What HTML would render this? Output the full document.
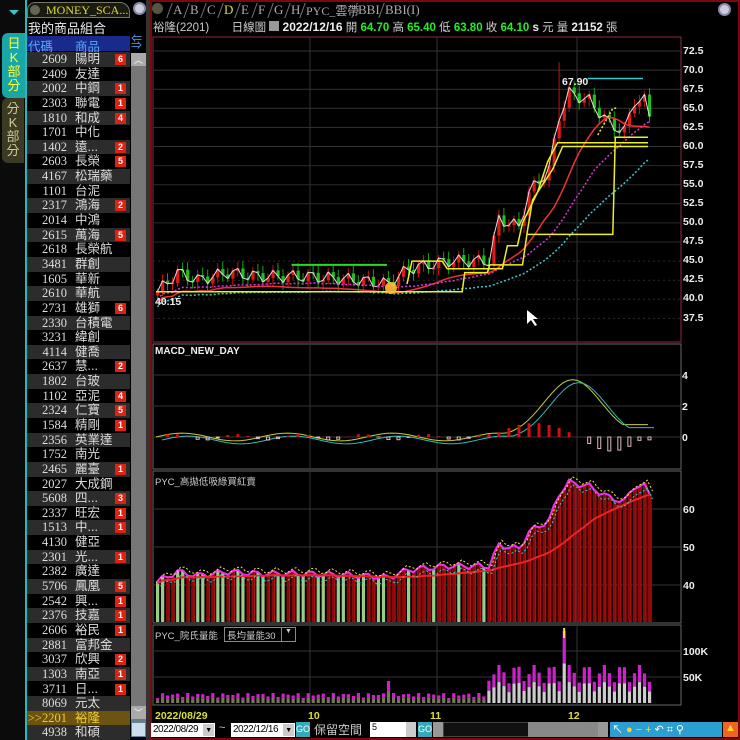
<!DOCTYPE html>
<html><head><meta charset="utf-8"><style>
*{margin:0;padding:0;box-sizing:border-box}
body{width:740px;height:740px;background:#000;overflow:hidden;position:relative;font-family:"Liberation Sans","Noto Sans CJK TC",sans-serif;color:#ddd}
.a{position:absolute}
.row{position:absolute;left:27px;width:103px;height:14.6px;font-size:12.5px;line-height:14.6px;color:#ddd}
.row .c{position:absolute;left:0;width:40px;text-align:right;font-family:"Liberation Serif","Noto Sans CJK TC",serif}
.row .n{position:absolute;left:48px}
.row .b{position:absolute;left:88px;top:2px;width:11px;height:11px;background:#d21;color:#fff;font-size:9px;line-height:11px;text-align:center;font-weight:bold}
.ax{position:absolute;left:683px;font-size:10.5px;font-weight:bold;color:#eee}
.tab{position:absolute;top:2px;height:16px;font-size:13px;color:#aaa;font-family:"Liberation Serif","Noto Sans CJK TC",serif;padding-left:4px}
.tab:before{content:"";position:absolute;left:0;top:1px;width:1px;height:15px;background:#777;transform:skewX(-20deg)}
</style></head><body>
<div class="a" style="left:0;top:0;width:26px;height:740px;background:#0b0b0b"></div>
<div class="a" style="left:9px;top:10px;width:0;height:0;border-left:5px solid transparent;border-right:5px solid transparent;border-top:5px solid #3cc"></div>
<div class="a" style="left:2px;top:33px;width:24px;height:65px;background:#1aa6a6;border-radius:6px 0 0 6px;color:#ff3;font-size:13px;line-height:14px;text-align:center;padding-top:4px">日<br>K<br>部<br>分</div>
<div class="a" style="left:2px;top:98px;width:22px;height:65px;background:#3c3a22;border-radius:6px 0 0 6px;color:#cc9;font-size:13px;line-height:14px;text-align:center;padding-top:4px">分<br>K<br>部<br>分</div>
<div class="a" style="left:25px;top:0;width:2px;height:740px;background:#2bb"></div>
<div class="a" style="left:27px;top:2px;width:103px;height:16px;border-radius:8px 10px 0 0;border:1px solid #776;background:#1a1a10"></div>
<div class="a" style="left:30px;top:5px;width:10px;height:10px;border-radius:50%;background:#665"></div>
<div class="a" style="left:46px;top:3px;font-size:12px;color:#dd3;font-family:'Liberation Serif',serif">MONEY_SCA...</div>
<div class="a" style="left:133px;top:2px;width:13px;height:13px;border-radius:50%;background:#ccd;border:2px solid #88a"></div>
<div class="a" style="left:28px;top:18px;font-size:13px;color:#eee">我的商品組合</div>
<div class="a" style="left:27px;top:36px;width:103px;height:15px;background:#1a2a8a"></div>
<div class="a" style="left:28px;top:36px;font-size:12.5px;color:#5af">代碼</div>
<div class="a" style="left:75px;top:36px;font-size:12.5px;color:#5af">商品</div>
<div class="a" style="left:131px;top:36px;width:15px;height:15px;color:#5af;font-size:11px;line-height:7px">⇐<br>⇒</div>
<div class="a" style="left:131px;top:53px;width:15px;height:672px;background:#777"></div>
<div class="a" style="left:131px;top:53px;width:15px;height:13px;background:#aaa;color:#fff;font-size:9px;text-align:center">︿</div>
<div class="a" style="left:131px;top:706px;width:15px;height:13px;background:#aaa;color:#fff;font-size:9px;text-align:center">﹀</div>
<div class="a" style="left:131px;top:722px;width:15px;height:15px;background:#cde;border:1px solid #58a"></div>
<div class="a" style="left:146px;top:0;width:4px;height:740px;background:#333"></div>
<div id="list"></div>

<div class="a" style="left:150px;top:0;width:590px;height:740px;border:2px solid #7a0a0a;border-top-width:2px"></div>
<div class="a" style="left:152px;top:3px;width:11px;height:11px;border-radius:50%;background:#554"></div>
<div class="tab" style="left:169px">A</div><div class="tab" style="left:186px">B</div><div class="tab" style="left:203px">C</div><div class="tab" style="left:220px;color:#dd3">D</div><div class="tab" style="left:237px">E</div><div class="tab" style="left:254px">F</div><div class="tab" style="left:270px">G</div><div class="tab" style="left:287px">H</div><div class="tab" style="left:302px;font-size:12px">PYC_雲帶</div><div class="tab" style="left:354px">BBI</div><div class="tab" style="left:381px">BBI(I)</div>
<div class="a" style="left:718px;top:3px;width:13px;height:13px;border-radius:50%;background:#ccd;border:2px solid #88a"></div>
<div class="a" style="left:153px;top:19px;font-size:11.5px;color:#ccc;white-space:nowrap">裕隆(2201)&nbsp;&nbsp;&nbsp;&nbsp;&nbsp;&nbsp;&nbsp;日線圖 <span style="display:inline-block;width:10px;height:10px;background:#999"></span> <b style="color:#eee;font-size:12px">2022/12/16</b> 開 <b style="color:#2e2">64.70</b> 高 <b style="color:#2e2">65.40</b> 低 <b style="color:#2e2">63.80</b> 收 <b style="color:#2e2">64.10</b> <b style="color:#eee">s</b> 元 量 <b style="color:#eee">21152</b> 張</div>
<svg class="a" style="left:0;top:0" width="740" height="740" id="sv"></svg>
<div class="ax" style="top:45px">72.5</div><div class="ax" style="top:64px">70.0</div><div class="ax" style="top:83px">67.5</div><div class="ax" style="top:102px">65.0</div><div class="ax" style="top:121px">62.5</div><div class="ax" style="top:140px">60.0</div><div class="ax" style="top:159px">57.5</div><div class="ax" style="top:178px">55.0</div><div class="ax" style="top:197px">52.5</div><div class="ax" style="top:216px">50.0</div><div class="ax" style="top:235px">47.5</div><div class="ax" style="top:254px">45.0</div><div class="ax" style="top:273px">42.5</div><div class="ax" style="top:292px">40.0</div><div class="ax" style="top:312px">37.5</div>
<div class="a" style="left:562px;top:76px;font-size:10.5px;font-weight:bold;color:#eee">67.90</div>
<div class="a" style="left:155px;top:296px;font-size:10.5px;font-weight:bold;color:#eee">40.15</div>
<div class="a" style="left:155px;top:346px;font-size:10px;font-weight:bold;color:#eee">MACD_NEW_DAY</div>
<div class="ax" style="left:682px;top:370px">4</div><div class="ax" style="left:682px;top:401px">2</div><div class="ax" style="left:682px;top:432px">0</div>
<div class="a" style="left:155px;top:474px;font-size:9.5px;color:#ccc">PYC_高拋低吸綠買紅賣</div>
<div class="ax" style="top:504px">60</div><div class="ax" style="top:542px">50</div><div class="ax" style="top:580px">40</div>
<div class="a" style="left:155px;top:628px;font-size:9.5px;color:#ccc">PYC_院氏量能</div>
<div class="a" style="left:224px;top:627px;width:72px;height:15px;border:1px solid #888;font-size:9.5px;color:#ccc;padding-left:2px">長均量能30<span style="position:absolute;right:0;top:0;width:14px;height:13px;border-left:1px solid #888;text-align:center;font-size:7px">▼</span></div>
<div class="ax" style="top:646px">100K</div><div class="ax" style="top:672px">50K</div>
<div class="a" style="left:155px;top:710px;font-size:10.5px;color:#dd3;font-weight:bold">2022/08/29</div>
<div class="a" style="left:308px;top:710px;font-size:10.5px;color:#dd3;font-weight:bold">10</div>
<div class="a" style="left:430px;top:710px;font-size:10.5px;color:#dd3;font-weight:bold">11</div>
<div class="a" style="left:568px;top:710px;font-size:10.5px;color:#dd3;font-weight:bold">12</div>
<div class="a" style="left:151px;top:723px;width:64px;height:14px;background:#fff;color:#000;font-size:10px;line-height:14px;padding-left:2px;letter-spacing:-0.5px">2022/08/29<span style="position:absolute;right:1px;top:1px;width:11px;height:12px;background:#ccc;font-size:7px;text-align:center">▼</span></div>
<div class="a" style="left:219px;top:722px;font-size:11px;color:#ccc">~</div>
<div class="a" style="left:231px;top:723px;width:64px;height:14px;background:#fff;color:#000;font-size:10px;line-height:14px;padding-left:2px;letter-spacing:-0.5px">2022/12/16<span style="position:absolute;right:1px;top:1px;width:11px;height:12px;background:#ccc;font-size:7px;text-align:center">▼</span></div>
<div class="a" style="left:296px;top:722px;width:14px;height:15px;background:#3ab;color:#fff;font-size:9px;text-align:center;line-height:15px">GO</div>
<div class="a" style="left:314px;top:721px;font-size:12px;color:#ccc">保留空間</div>
<div class="a" style="left:370px;top:722px;width:46px;height:15px;background:#fff;color:#000;font-size:9px;padding-left:2px">5<span style="position:absolute;right:0;top:0;width:10px;height:15px;background:#ccc"></span></div>
<div class="a" style="left:418px;top:722px;width:14px;height:15px;background:#3ab;color:#fff;font-size:9px;text-align:center;line-height:15px">GO</div>
<div class="a" style="left:433px;top:722px;width:10px;height:15px;background:#999"></div>
<div class="a" style="left:443px;top:722px;width:155px;height:15px;background:#111;border:1px solid #444"></div>
<div class="a" style="left:528px;top:722px;width:70px;height:15px;background:#888"></div>
<div class="a" style="left:598px;top:722px;width:10px;height:15px;background:#999"></div>
<div class="a" style="left:610px;top:722px;width:112px;height:15px;background:#2a9fd0"></div>
<div class="a" style="left:612px;top:721px;font-size:11px;color:#fff;letter-spacing:3px;white-space:nowrap">↖<span style="color:#fc3">●</span><span style="color:#fd3">−+</span>↶⌗⚲</div>
<div class="a" style="left:723px;top:722px;width:15px;height:15px;background:#e62;color:#fd3;font-size:11px;text-align:center">▲</div>
<script>
(function(){
var rows=[["2609","陽明","6"],["2409","友達",""],["2002","中鋼","1"],["2303","聯電","1"],["1810","和成","4"],["1701","中化",""],["1402","遠...","2"],["2603","長榮","5"],["4167","松瑞藥",""],["1101","台泥",""],["2317","鴻海","2"],["2014","中鴻",""],["2615","萬海","5"],["2618","長榮航",""],["3481","群創",""],["1605","華新",""],["2610","華航",""],["2731","雄獅","6"],["2330","台積電",""],["3231","緯創",""],["4114","健喬",""],["2637","慧...","2"],["1802","台玻",""],["1102","亞泥","4"],["2324","仁寶","5"],["1584","精剛","1"],["2356","英業達",""],["1752","南光",""],["2465","麗臺","1"],["2027","大成鋼",""],["5608","四...","3"],["2337","旺宏","1"],["1513","中...","1"],["4130","健亞",""],["2301","光...","1"],["2382","廣達",""],["5706","鳳凰","5"],["2542","興...","1"],["2376","技嘉","1"],["2606","裕民","1"],["2881","富邦金",""],["3037","欣興","2"],["1303","南亞","1"],["3711","日...","1"],["8069","元太",""],["2201","裕隆",""],["4938","和碩",""]];
var h="";rows.forEach(function(r,i){var y=52+i*14.64;var bg=i==45?"#6b5410":(i%2==0?"#2c2c2c":"#000");
h+='<div class="row" style="top:'+y+'px;background:'+bg+'"><span class="c"'+(i==45?' style="left:-4px;width:44px;color:#ec3"':'')+'>'+(i==45?"&gt;&gt;":"")+r[0]+'</span><span class="n"'+(i==45?' style="color:#ec3"':'')+'>'+r[1]+'</span>'+(r[2]?'<span class="b">'+r[2]+'</span>':'')+'</div>';});
document.getElementById("list").innerHTML=h;
var s="";
function L(x1,y1,x2,y2,c,w,d){s+='<line x1="'+x1+'" y1="'+y1+'" x2="'+x2+'" y2="'+y2+'" stroke="'+c+'" stroke-width="'+(w||1)+'"'+(d?' stroke-dasharray="'+d+'"':'')+'/>';}
function R(x,y,w,hh,f,st){s+='<rect x="'+x+'" y="'+y+'" width="'+w+'" height="'+Math.max(0,hh)+'" fill="'+f+'"'+(st?' stroke="'+st+'"':'')+'/>';}
function P(pts,c,w,d){s+='<polyline fill="none" points="'+pts.map(function(p){return p[0].toFixed(1)+","+p[1].toFixed(1)}).join(" ")+'" stroke="'+c+'" stroke-width="'+(w||1)+'"'+(d?' stroke-dasharray="'+d+'"':'')+'/>';}
[[37,342],[344,469],[471,623],[625,705]].forEach(function(p){R(153,p[0],528,p[1]-p[0],"none","#666");});
R(153,37,528,305,"none","#8a2a4a");
[310,437,577].forEach(function(x){L(x,37,x,705,"#333");});
for(var i=0;i<15;i++){var y=51+i*19.1;L(153,y,681,y,i<6?"#333":"#2a2a2a",1,i>=11?"2,3":null);}
[375,406,437].forEach(function(y){L(153,y,681,y,"#333");});
[509,547,585].forEach(function(y){L(153,y,681,y,"#333");});
[651,677].forEach(function(y){L(153,y,681,y,"#333");});
var kp=[[0,41],[4,43.5],[8,42.5],[14,43.5],[20,43],[30,43],[40,42.5],[46,42],[50,44],[58,45],[66,45],[68,50.5],[72,49.5],[74,54],[78,57],[80,64],[82,67],[86,66],[90,63],[93,62],[95,66],[97,66],[98,64]];
function pr(i){for(var k=0;k<kp.length-1;k++){if(i<=kp[k+1][0]){var t=(i-kp[k][0])/(kp[k+1][0]-kp[k][0]);return kp[k][1]+t*(kp[k+1][1]-kp[k][1]);}}return 64;}
var N=99,x0=156,dx=5.02;function X(i){return x0+i*dx;}function Y(p){return 51+(72.5-p)*7.64;}
var cl=[];for(var i=0;i<N;i++){cl.push(pr(i)+Math.sin(i*1.7)*0.8);}
var wl=[];
for(var i=0;i<N;i++){var o=i?cl[i-1]:cl[0]-0.5,c=cl[i];var up=c>=o;var hi=Math.max(o,c)+0.4+Math.abs(Math.sin(i*2.3))*0.6,lo=Math.min(o,c)-0.4-Math.abs(Math.cos(i*1.9))*0.6;
if(i==80)hi=71;var col=up?"#e01818":"#1fbf1f";L(X(i)+1.5,Y(hi),X(i)+1.5,Y(lo),up?"#c11":"#1a1");R(X(i),Y(Math.max(o,c)),3.2,Math.max(1.5,Math.abs(Y(o)-Y(c))),col);wl.push([X(i)+1.5,Y(c)]);}
P(wl,"#ddd",1);
function ma(n,off){var a=[];for(var i=0;i<N;i++){var sm=0,k=0;for(var j=Math.max(0,i-n);j<=i;j++){sm+=cl[j];k++;}a.push([X(i)+1.5,Y(sm/k-off)]);}return a;}
P(ma(10,1.5),"#e33",1.5);P(ma(20,1.0),"#d3d",1.5,"2,2");P(ma(30,2.0),"#3cc",1.5,"2,2");
L(X(27),Y(44.5),X(46),Y(44.5),"#2d2",2);
function step(pts,d){var a=[];pts.forEach(function(p){a.push([X(p[0]),Y(p[1])]);});P(a,"#ee2",1.5,d);}
step([[0,41],[61,41],[61.5,43.5],[66,43.5],[66.5,44.5],[73,44.5],[74,49],[75,53],[77,55],[79,57],[81,60],[98,60]]);
step([[50,42],[51,45],[57,45],[58,44],[69,44],[70,47],[72,47],[73,50],[76,54],[78,58],[80,60.5],[98,60.5]]);
step([[74,48.5],[91,48.5],[91.5,61.2],[98,61.2]]);
step([[88,61.5],[91,65],[92,65]],"2,2");
L(X(86),Y(68.9),X(97),Y(68.9),"#3cc",1.5);
s+='<circle cx="391" cy="288" r="6" fill="#fb3" opacity="0.9"/>';
s+='<polygon points="527,310 527,324 531,320 535,326 537,325 533,319 538,319" fill="#fff"/>';
var m1=[],m2=[];for(var i=0;i<N;i++){var v=0.25*Math.sin(i*0.3);if(i>62)v=Math.max(v,3.7*Math.exp(-Math.pow((i-83)/8,2)));if(i>90)v=Math.max(0.8,v);var yy=437-v*15.5;m1.push([X(i),yy]);m2.push([X(i)+6,yy+3]);}
P(m1,"#cc3",1);P(m2,"#3bb",1);
for(var i=0;i<N;i+=2){var hv=i>66&&i<84?Math.sin((i-66)/18*Math.PI)*14:(i>=84&&i<97?-Math.sin((i-84)/13*Math.PI)*14:(Math.sin(i*0.5)*3));if(hv>0)R(X(i),437-hv,3,hv,"#c11");else R(X(i),437,3,-hv,"none","#dbb");}
var tp=[];for(var i=0;i<N;i++){var p=cl[i];var y=585-(p-40)*3.8;var gr=(i<46&&i%4<2)||(i>=46&&i<66&&i%5==0);R(X(i),y,3.2,622-y,gr?"#9c8":"#8a0a0a");if(!gr)L(X(i)+3.2,y,X(i)+3.2,622,"#b11");tp.push([X(i)+1.5,y]);}
P(tp,"#e3e",2);var ml=[];for(var i=0;i<N;i++){var sm=0,k=0;for(var j=Math.max(0,i-20);j<=i;j++){sm+=cl[j];k++;}ml.push([X(i)+1.5,585-(sm/k-40)*3.8+2]);}P(ml,"#e22",2);
P(tp.map(function(p){return[p[0]+3,p[1]+5]}),"#3cc",1,"2,2");P(tp.map(function(p){return[p[0]+3,p[1]-3]}),"#ee3",1,"2,2");
for(var i=0;i<N;i++){var v=i<66?5+Math.abs(Math.sin(i*1.3))*5:16+Math.abs(Math.sin(i*0.9))*22;if(i==46)v=22;if(i==81)v=72;var y=703-v;R(X(i),y,3.2,v*0.45,"#c2c");R(X(i),y+v*0.45,3.2,v*0.55,i>=66?"#ccc":"#775");}
L(X(81)+1.5,628,X(81)+1.5,638,"#fd3",2);
document.getElementById("sv").innerHTML=s;
})();
</script>
</body></html>
